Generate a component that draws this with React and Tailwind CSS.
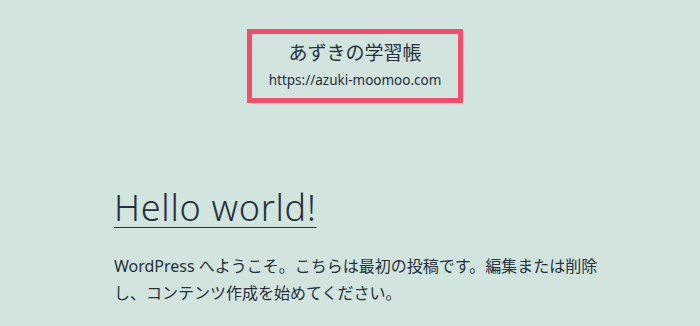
export default function App() {
  return (
    <div className="min-h-[326px] bg-[#d1e4dd] text-[#28303d] overflow-hidden" style={{ fontFamily: '"Noto Sans", "Noto Sans CJK JP", sans-serif' }}>
      <header className="flex justify-center pt-[29px] pl-[10px]">
        <div className="w-[216px] h-[74px] border-[5px] border-[#f44d6c] flex flex-col items-center pt-[6px]">
          <p className="text-[19px] leading-[26px]">あずきの学習帳</p>
          <p className="text-[13.5px] leading-[20px] mt-[4px]">https://azuki-moomoo.com</p>
        </div>
      </header>
      <main className="pl-[114px] pt-[83px]">
        <h1 className="text-[36px] font-light leading-[44px] tracking-[0.7px] underline underline-offset-[6px] decoration-1">Hello world!</h1>
        <p className="w-[484px] text-[16px] leading-[27px] mt-[23px]">
          WordPress へようこそ。こちらは最初の投稿です。編集または削除し、コンテンツ作成を始めてください。
        </p>
      </main>
    </div>
  )
}
